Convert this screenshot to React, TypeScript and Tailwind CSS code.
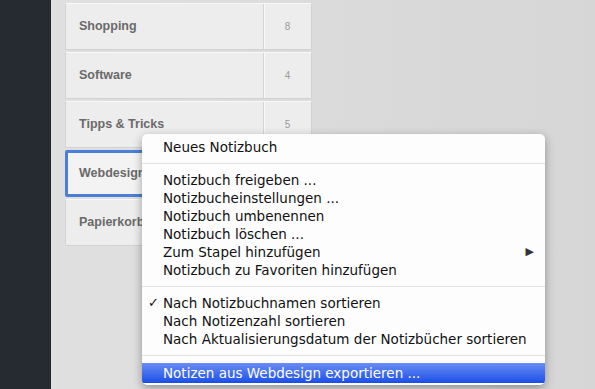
import React from "react";

const notebooks = [
  { name: "Shopping", count: "8" },
  { name: "Software", count: "4" },
  { name: "Tipps & Tricks", count: "5" },
  { name: "Webdesign", count: "", selected: true },
  { name: "Papierkorb", count: "" },
];

type Item = { label: string; checked?: boolean; submenu?: boolean; highlighted?: boolean };

const groups: Item[][] = [
  [{ label: "Neues Notizbuch" }],
  [
    { label: "Notizbuch freigeben ..." },
    { label: "Notizbucheinstellungen ..." },
    { label: "Notizbuch umbenennen" },
    { label: "Notizbuch löschen ..." },
    { label: "Zum Stapel hinzufügen", submenu: true },
    { label: "Notizbuch zu Favoriten hinzufügen" },
  ],
  [
    { label: "Nach Notizbuchnamen sortieren", checked: true },
    { label: "Nach Notizenzahl sortieren" },
    { label: "Nach Aktualisierungsdatum der Notizbücher sortieren" },
  ],
  [{ label: "Notizen aus Webdesign exportieren ...", highlighted: true }],
];

const MenuRow = ({ item }: { item: Item }) => (
  <div
    className={`relative flex items-center pl-[21px] pr-[11px] ${
      item.highlighted
        ? "h-[20px] bg-gradient-to-b from-[#6a8cf5] to-[#1a4de6] text-white"
        : "h-[18px] text-[#111]"
    }`}
  >
    {item.checked && <span className="absolute left-[6px] text-[13px]">✓</span>}
    <span className="flex-1 whitespace-nowrap">{item.label}</span>
    {item.submenu && <span className="text-[11px] text-[#333]">▶</span>}
  </div>
);

const App = () => {
  return (
    <div className="relative w-[595px] h-[389px] overflow-hidden flex bg-[#d9d9d9]">
      {/* dark sidebar */}
      <div className="w-[51px] h-full bg-[#262a31]" />

      {/* notebook list */}
      <div className="flex-1 h-full bg-gradient-to-r from-[#e0e0e0] to-[#d6d6d6] pl-[14px] pt-[3px]">
        <div className="w-[247px] flex flex-col gap-[2px]">
          {notebooks.map((n) => (
            <div
              key={n.name}
              className={`flex h-[47px] rounded-[2px] ${
                n.selected
                  ? "border-[3px] border-[#4a7ed8] bg-[#f3f3f3]"
                  : "border border-[#d2d2d2] border-t-[#f8f8f8] bg-[#ededed]"
              }`}
              style={{ fontFamily: '"Liberation Sans", Arial, sans-serif' }}
            >
              <div className={`flex-1 flex items-center ${n.selected ? "pl-[11px]" : "pl-[13px]"} text-[12.5px] font-bold text-[#6a6a6a]`}>
                {n.name}
              </div>
              <div className="w-[48px] flex items-center justify-center border-l border-[#d4d4d4] shadow-[inset_1px_0_0_#f8f8f8] text-[10px] text-[#9a9a9a]">
                {n.count}
              </div>
            </div>
          ))}
        </div>
      </div>

      {/* context menu */}
      <div
        className="absolute left-[142px] top-[134px] w-[403px] h-[251px] rounded-[5px] bg-[#fdfdfd] pt-[4px] pb-[2px] shadow-[0_3px_10px_rgba(0,0,0,0.35)] text-[13.5px] overflow-hidden"
        style={{ fontFamily: '"DejaVu Sans", "Lucida Grande", sans-serif' }}
      >
        {groups.map((g, gi) => (
          <div key={gi}>
            {gi > 0 && <div className="my-[7px] h-px bg-[#e2e2e2]" />}
            {g.map((item) => (
              <MenuRow key={item.label} item={item} />
            ))}
          </div>
        ))}
      </div>
    </div>
  );
};

export default App;
